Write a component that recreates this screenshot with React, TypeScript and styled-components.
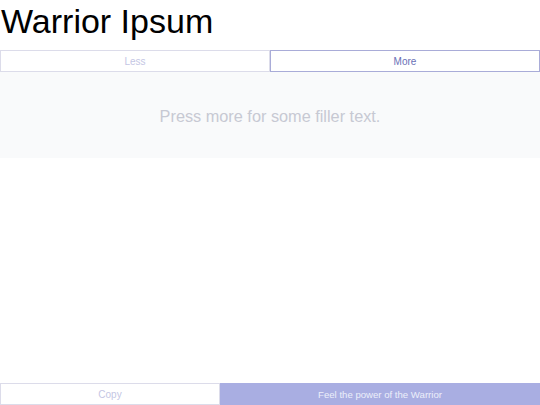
import * as React from 'react'
import { useState } from 'react'
import styled, { createGlobalStyle } from 'styled-components'

const GlobalStyle = createGlobalStyle`
    html, body {
        margin: 0;
        padding: 0;
        height: 100%;
        background: #ffffff;
        font-family: "Liberation Sans", Arial, sans-serif;
    }
    #root {
        height: 100%;
    }
`

const Page = styled.div`
    display: flex;
    flex-direction: column;
    height: 100vh;
    box-sizing: border-box;
`

const Title = styled.h1`
    margin: 0;
    padding: 0 0 0 1px;
    height: 50px;
    font-size: 34px;
    font-weight: 400;
    line-height: 42px;
    color: #000;
`

const Row = styled.div`
    display: flex;
`

const ToggleButton = styled.button<{ active: boolean }>`
    flex: 1;
    height: 22px;
    margin: 0;
    padding: 0;
    background: #fff;
    font-family: "Liberation Sans", Arial, sans-serif;
    font-size: 10px;
    border: 1px solid ${p => (p.active ? '#a9acd8' : '#dcdcea')};
    color: ${p => (p.active ? '#6a6fb6' : '#c4c6e4')};
    cursor: pointer;
`

const Filler = styled.div`
    height: 86px;
    box-sizing: border-box;
    padding-top: 2px;
    display: flex;
    align-items: center;
    justify-content: center;
    background: #f9fafb;
    color: #c7c9d3;
    font-size: 16.3px;
`

const Spacer = styled.div`
    flex: 1;
`

const Copy = styled.button`
    width: 220px;
    height: 22px;
    margin: 0;
    padding: 0;
    background: #fff;
    border: 1px solid #dcdcea;
    color: #c4c6e4;
    font-family: "Liberation Sans", Arial, sans-serif;
    font-size: 10px;
`

const Power = styled.button`
    flex: 1;
    height: 22px;
    margin: 0;
    padding: 0;
    background: #a9aee2;
    border: 0;
    color: #eceefa;
    font-family: "Liberation Sans", Arial, sans-serif;
    font-size: 9.6px;
`

export default function App(): JSX.Element {
    const [more, setMore] = useState(true)
    return (
        <Page>
            <GlobalStyle />
            <Title>Warrior Ipsum</Title>
            <Row>
                <ToggleButton active={!more} onClick={() => setMore(false)}>
                    Less
                </ToggleButton>
                <ToggleButton active={more} onClick={() => setMore(true)}>
                    More
                </ToggleButton>
            </Row>
            <Filler>Press more for some filler text.</Filler>
            <Spacer />
            <Row>
                <Copy>Copy</Copy>
                <Power>Feel the power of the Warrior</Power>
            </Row>
        </Page>
    )
}
